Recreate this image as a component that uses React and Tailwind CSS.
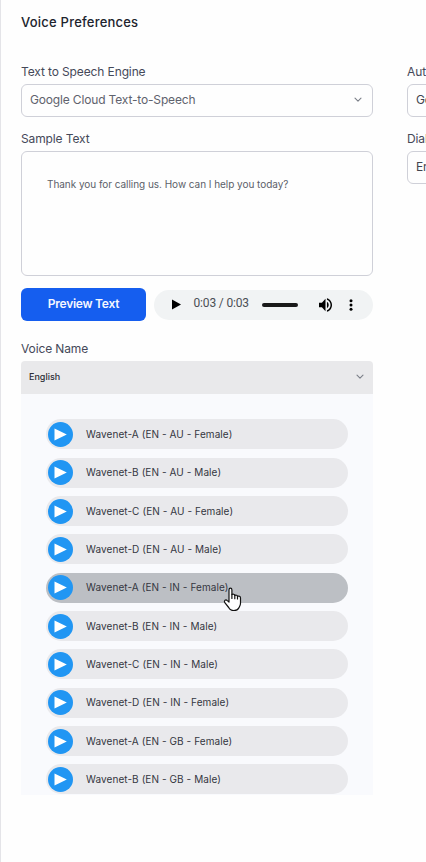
import React from "react";

const voices = [
  "Wavenet-A (EN - AU - Female)",
  "Wavenet-B (EN - AU - Male)",
  "Wavenet-C (EN - AU - Female)",
  "Wavenet-D (EN - AU - Male)",
  "Wavenet-A (EN - IN - Female)",
  "Wavenet-B (EN - IN - Male)",
  "Wavenet-C (EN - IN - Male)",
  "Wavenet-D (EN - IN - Female)",
  "Wavenet-A (EN - GB - Female)",
  "Wavenet-B (EN - GB - Male)",
];

function Chevron() {
  return (
    <svg className="relative -top-px" width="8" height="6" viewBox="0 0 8 6" fill="none" stroke="#7b7f88" strokeWidth="1.1" strokeLinecap="round" strokeLinejoin="round">
      <path d="M1 1.2 4 4.2 7 1.2" />
    </svg>
  );
}

function Label({ children }) {
  return <div className="h-[18px] text-[12px] leading-[18px] tracking-[-0.12px] whitespace-nowrap text-[#454959]">{children}</div>;
}

function SelectBox({ children, dark }) {
  return (
    <div className="mt-[3px] flex h-[33px] items-center justify-between rounded-md border border-[#cfd0d8] bg-[#fefefe] pr-2.5 pl-2">
      <span className={dark ? "pb-[2px] text-[12px] tracking-[-0.16px] text-[#41444f]" : "pb-[2px] text-[12px] tracking-[-0.16px] text-[#5f626d]"}>{children}</span>
      <Chevron />
    </div>
  );
}

function HandCursor() {
  return (
    <svg className="absolute top-[14px] left-[177px]" width="19" height="25" viewBox="0 0 19 25" fill="#fff" stroke="#111" strokeWidth="1.2" strokeLinejoin="round" strokeLinecap="round">
      <path d="M6 15V3c0-2.400 2.900-2.400 2.900 0v4.600c1-.8 2.700-.4 2.900.8 1.100-.6 2.500-.2 2.700.9 1.300-.5 3 0 3 1.700v5.200c0 2.300-1.200 3.400-1.700 4.900-.8 1.700-2.400 2.500-4.900 2.500-2.700 0-4.300-1.200-5.200-3.100L1.800 15.700c-1.300-2.300 1-3.700 2.500-2.100z" />
      <path d="M8.900 7.600v3.800M11.800 8.400v3.300M14.500 9.300v2.600" />
    </svg>
  );
}

function VoiceRow({ name, active }) {
  return (
    <div className={`relative flex h-[30px] shrink-0 items-center rounded-full pl-0.5 ${active ? "bg-[#bcbfc4]" : "bg-[#e9e9ec]"}`}>
      <span className="flex size-[25px] items-center justify-center rounded-full bg-[#2196f3]">
        <svg width="25" height="25" viewBox="0 0 25 25" fill="#fff">
          <path d="M6.500 6.500 18.800 12.500 6.500 18.500z" />
        </svg>
      </span>
      <span className="ml-[13px] pt-[0.4px] text-[10px] tracking-[0.08px] text-[#34363f]">{name}</span>
      {active && <HandCursor />}
    </div>
  );
}

function AudioPlayer() {
  return (
    <div className="flex h-[30px] w-[219px] items-center rounded-full bg-[#f1f3f4]">
      <svg className="ml-[18px]" width="9" height="11" viewBox="0 0 9 11" fill="#000">
        <path d="M0 .5 9 5.500 0 10.500z" />
      </svg>
      <span className="ml-[12.500px] w-[56.500px] pb-[3px] font-['Roboto',sans-serif] text-[12px] tracking-[-0.16px] whitespace-nowrap text-[#4b4f55]">0:03 / 0:03</span>
      <span className="ml-[12px] h-1 w-9 rounded-full bg-[#191919]" />
      <svg className="ml-[21px]" width="13" height="14" viewBox="3 3 18 18" preserveAspectRatio="none" fill="#000">
        <path d="M3 9v6h4l5 5V4L7 9H3zm13.500 3A4.500 4.500 0 0 0 14 7.970v8.050A4.470 4.470 0 0 0 16.500 12zM14 3.230v2.060c2.890.860 5 3.540 5 6.710s-2.110 5.850-5 6.710v2.060c4.010-.910 7-4.490 7-8.770s-2.990-7.860-7-8.770z" />
      </svg>
      <svg className="ml-[17px]" width="4" height="12" viewBox="0 0 4 12" fill="#000">
        <circle cx="2" cy="1.700" r="1.500" />
        <circle cx="2" cy="6" r="1.500" />
        <circle cx="2" cy="10.300" r="1.500" />
      </svg>
    </div>
  );
}

export default function App() {
  return (
    <div className="relative h-[862px] w-[426px] overflow-hidden border-l border-[#e4e4e8] bg-[#fefefe] pl-5 font-['Inter',sans-serif]">
      <span className="absolute top-[208px] -left-px h-[10px] w-px bg-[#b9b9c3]" />
      <span className="absolute top-[226px] -left-px h-[10px] w-px bg-[#a5a5b2]" />
      <h1 className="pt-[13px] text-[13px] leading-[18px] font-medium tracking-[0.22px] text-[#20232d]">Voice Preferences</h1>
      <div className="mt-8 flex w-[740px] gap-[34px]">
        <div className="w-[352px] shrink-0">
          <Label>Text to Speech Engine</Label>
          <SelectBox>Google Cloud Text-to-Speech</SelectBox>
          <div className="mt-[13px]">
            <Label>Sample Text</Label>
          </div>
          <div className="mt-[3px] h-[125px] rounded-md border border-[#cfd0d8] px-[25px] pt-[24px] text-[10px] leading-4 tracking-[-0.04px] text-[#5c5f69]">
            Thank you for calling us. How can I help you today?
          </div>
          <div className="mt-3 flex items-center justify-between">
            <button className="h-[33px] w-[125px] rounded-md bg-[#155eef] pb-[2px] text-[12px] font-semibold tracking-[-0.25px] text-[#f4f7ff]">Preview Text</button>
            <AudioPlayer />
          </div>
          <div className="mt-[19px]">
            <Label>Voice Name</Label>
          </div>
          <div className="mt-[3px] flex h-[33px] items-center justify-between rounded-t bg-[#e9e9eb] pr-[9px] pl-2">
            <span className="pb-[2px] text-[9px] font-medium text-[#2c2e36]">English</span>
            <Chevron />
          </div>
          <div className="flex h-[401px] flex-col gap-[8.330px] overflow-hidden bg-[#f9fafd] pt-[25.400px] pr-[25px] pl-[25px]">
            {voices.map((name, i) => (
              <VoiceRow key={name} name={name} active={i === 4} />
            ))}
          </div>
        </div>
        <div className="w-[352px] shrink-0">
          <Label>Authentication</Label>
          <SelectBox dark>Google Cloud</SelectBox>
          <div className="mt-[13px]">
            <Label>Dialect</Label>
          </div>
          <SelectBox dark>English</SelectBox>
        </div>
      </div>
    </div>
  );
}
